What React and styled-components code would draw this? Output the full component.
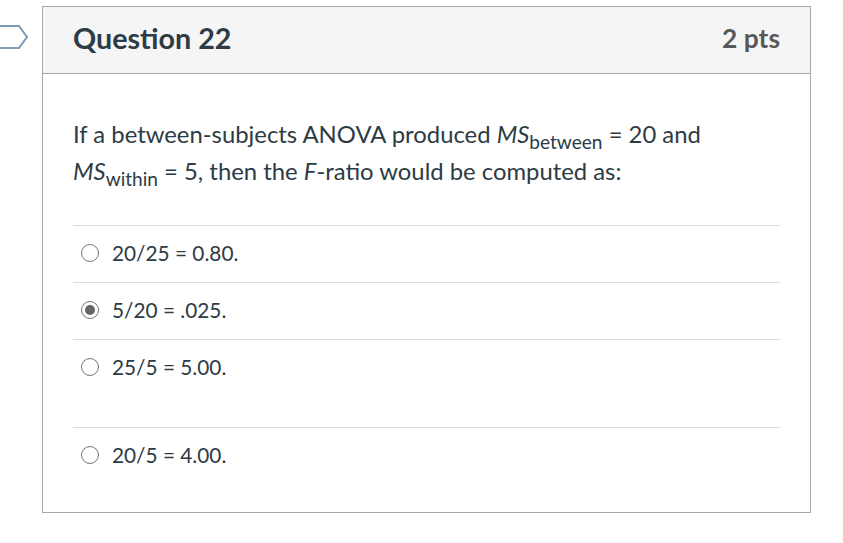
import React from 'react'
import styled, { createGlobalStyle, css } from 'styled-components'

const GlobalStyle = createGlobalStyle`
  html, body {
    margin: 0;
    padding: 0;
    background: #ffffff;
    font-family: Lato, "Liberation Sans", sans-serif;
    color: #2d3b45;
  }
`

const Page = styled.div`
  position: relative;
  padding: 6px 0 0 42px;
`

const Flag = styled.svg`
  position: absolute;
  left: 0;
  top: 25px;
`

const Card = styled.div`
  width: 767px;
  height: 505px;
  border: 1px solid #a8a8a8;
  display: flex;
  flex-direction: column;
`

const Header = styled.div`
  display: flex;
  align-items: center;
  justify-content: space-between;
  height: 67px;
  padding: 0 30px 4px 30px;
  background: #f5f5f5;
  border-bottom: 1px solid #a8a8a8;
  box-sizing: border-box;
`

const Title = styled.h2`
  margin: 0;
  font-size: 28.7px;
  font-weight: 700;
  color: #2d3b45;
`

const Points = styled.span`
  font-size: 26.4px;
  font-weight: 700;
  color: #585858;
`

const Body = styled.div`
  padding: 41px 30px 0 30px;
`

const Prompt = styled.p`
  margin: 0 0 36px;
  font-size: 23.85px;
  line-height: 37px;
`

const Sub = styled.sub`
  font-size: 0.8em;
  line-height: 0;
  vertical-align: -0.3em;
`

const Options = styled.div`
  display: flex;
  flex-direction: column;
`

const Option = styled.label`
  display: flex;
  align-items: center;
  gap: 13px;
  padding: 12px 0 14px 8px;
  border-top: 1px solid #dcdcdc;
  font-size: 20.8px;
  line-height: 30px;

  ${({ tall }) =>
    tall &&
    css`
      align-items: flex-start;
      padding-bottom: 45px;
    `}
`

const Radio = styled.span`
  flex: none;
  width: 16px;
  height: 16px;
  border: 1.5px solid #777;
  border-radius: 50%;
  display: flex;
  align-items: center;
  justify-content: center;
  ${({ tall }) => tall && css`margin-top: 6px;`}

  ${({ checked }) =>
    checked &&
    css`
      &::after {
        content: '';
        width: 10px;
        height: 10px;
        border-radius: 50%;
        background: #666;
      }
    `}
`

const answers = [
  { text: '20/25 = 0.80.' },
  { text: '5/20 = .025.', checked: true },
  { text: '25/5 = 5.00.', tall: true },
  { text: '20/5 = 4.00.' },
]

const App = () => (
  <>
    <GlobalStyle />
    <Page>
      <Flag width='30' height='26' viewBox='0 0 30 26'>
        <path
          d='M-2 1 H19 L27 12 L19 23 H-2'
          fill='none'
          stroke='#7f9bb7'
          strokeWidth='2'
        />
      </Flag>
      <Card>
        <Header>
          <Title>Question 22</Title>
          <Points>2 pts</Points>
        </Header>
        <Body>
          <Prompt>
            If a between-subjects ANOVA produced <i>MS</i>
            <Sub>between</Sub> = 20 and
            <br />
            <i>MS</i>
            <Sub>within</Sub> = 5, then the <i>F</i>-ratio would be computed as:
          </Prompt>
          <Options>
            {answers.map((a) => (
              <Option key={a.text} tall={a.tall}>
                <Radio checked={a.checked} tall={a.tall} />
                <span>{a.text}</span>
              </Option>
            ))}
          </Options>
        </Body>
      </Card>
    </Page>
  </>
)

export default App
